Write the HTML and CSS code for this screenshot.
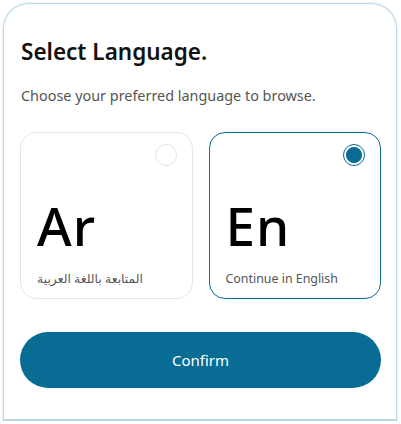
FILE: index.html
```html
<!DOCTYPE html>
<html lang="en">
<head>
<meta charset="utf-8">
<link rel="stylesheet" href="styles.css">
</head>
<body>
<div class="sheet">
  <h1 class="title">Select Language.</h1>
  <p class="subtitle">Choose your preferred language to browse.</p>
  <div class="options">
    <div class="option">
      <span class="radio"></span>
      <div class="code">Ar</div>
      <div class="label" dir="rtl">المتابعة باللغة العربية</div>
    </div>
    <div class="option selected">
      <span class="radio"></span>
      <div class="code">En</div>
      <div class="label">Continue in English</div>
    </div>
  </div>
  <button class="confirm">Confirm</button>
</div>
</body>
</html>
```
FILE: styles.css
```css
html, body {
  margin: 0;
  padding: 0;
  background: #ffffff;
}
body {
  font-family: "Noto Sans", "DejaVu Sans", sans-serif;
  color: #111;
}
.sheet {
  box-sizing: border-box;
  margin: 3px 0 0 3px;
  width: 394px;
  height: 418px;
  border: 1px solid #b9d8e6;
  border-bottom-width: 2px;
  border-radius: 26px 26px 0 0;
  padding: 34px 15px 0 16px;
  box-shadow: 0 0 2px rgba(120, 180, 210, 0.5);
}
.title {
  margin: 0 0 0 1px;
  font-size: 22.5px;
  font-weight: 600;
  line-height: 28px;
  letter-spacing: 0;
  color: #111;
}
.subtitle {
  margin: 21px 0 0 1px;
  font-size: 14.4px;
  line-height: 18px;
  color: #555;
}
.options {
  display: grid;
  grid-template-columns: 1fr 1fr;
  gap: 16px;
  margin-top: 27px;
}
.option {
  position: relative;
  box-sizing: border-box;
  height: 167px;
  border: 1px solid #e6e6e6;
  border-radius: 16px;
  padding: 61px 16px 0 16px;
}
.option.selected {
  border-color: #0a6b93;
}
.radio {
  position: absolute;
  top: 11px;
  right: 15px;
  width: 20px;
  height: 20px;
  border: 1px solid #e4e4e4;
  border-radius: 50%;
  box-sizing: content-box;
}
.selected .radio {
  border-color: #0a6b93;
  background: radial-gradient(circle, #0a6b93 0 7.5px, #fff 8.5px);
}
.code {
  font-size: 53px;
  font-weight: 500;
  line-height: 64px;
  color: #000;
  letter-spacing: 1px;
}
.label {
  margin-top: 13px;
  font-size: 12.4px;
  line-height: 16px;
  color: #555;
  text-align: left;
}
.option .label[dir="rtl"] {
  text-align: right;
  width: max-content;
}
.confirm {
  display: block;
  width: 100%;
  height: 56px;
  margin-top: 33px;
  border: none;
  border-radius: 28px;
  background: #086c94;
  color: #fff;
  font-family: "Noto Sans", "DejaVu Sans", sans-serif;
  font-size: 15px;
}
```
